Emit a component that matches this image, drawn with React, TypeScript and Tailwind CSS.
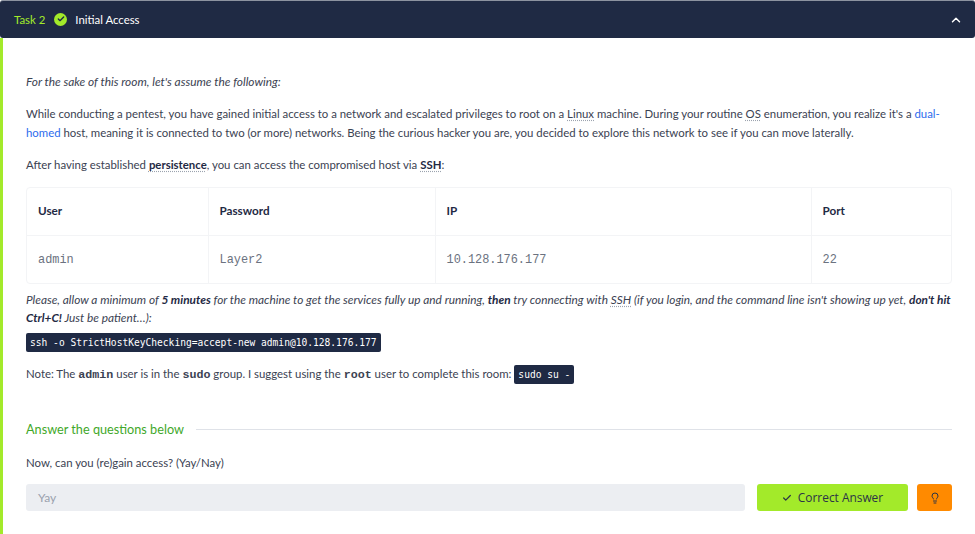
import { Check, ChevronUp, Lightbulb } from "lucide-react";

const Dotted = ({ children }: { children: React.ReactNode }) => (
  <span className="underline decoration-dotted decoration-[#9ca3af] underline-offset-2">{children}</span>
);
const Code = ({ children }: { children: React.ReactNode }) => (
  <code className="rounded-[2px] bg-[#1f2a44] px-1 py-[4px] font-['DejaVu_Sans_Mono',monospace] text-[9.6px] text-white">{children}</code>
);
const Mono = ({ children }: { children: React.ReactNode }) => (
  <span className="font-['Liberation_Mono',monospace] text-[11.7px] font-bold">{children}</span>
);

export default function App() {
  return (
    <div className="h-[534px] w-[975px] overflow-hidden bg-white font-['Lato',sans-serif] text-[11.4px] text-[#3b4252]">
      <header className="flex h-[38px] items-center justify-between rounded-[3px] border-t border-[#8c93a0] bg-[#1f2a44] pl-[14px] pr-[12px]">
        <div className="flex items-center">
          <span className="text-[#a3ea2a]">Task 2</span>
          <span className="ml-[9px] flex h-[13px] w-[13px] items-center justify-center rounded-full bg-[#a3ea2a]">
            <Check size={8} strokeWidth={4} className="text-[#1f2a44]" />
          </span>
          <span className="ml-[8px] text-white">Initial Access</span>
        </div>
        <ChevronUp size={14} strokeWidth={2.5} className="text-white" />
      </header>
      <main className="h-[496px] border-l-[3px] border-[#a3ea2a] pb-4 pl-[23px] pr-[23px] pt-[34px]">
        <p className="text-[11.9px] leading-[19px] italic">For the sake of this room, let's assume the following:</p>
        <p className="mt-[13px] leading-[19px]">
          While conducting a pentest, you have gained initial access to a network and escalated privileges to root on a <Dotted>Linux</Dotted> machine. During your routine <Dotted>OS</Dotted> enumeration, you realize it's a <span className="text-[#2d6bed]">dual-homed</span> host, meaning it is connected to two (or more) networks. Being the curious hacker you are, you decided to explore this network to see if you can move laterally.
        </p>
        <p className="mt-[13px] leading-[19px]">
          After having established <b className="text-[#1f2a44]"><Dotted>persistence</Dotted></b>, you can access the compromised host via <b className="text-[#1f2a44]"><Dotted>SSH</Dotted></b>:
        </p>
        <div className="mt-[13px] overflow-hidden rounded-[4px] border border-[#f3f4f6]">
          <table className="w-full table-fixed border-collapse">
            <colgroup>
              <col className="w-[181px]" />
              <col className="w-[227px]" />
              <col className="w-[376px]" />
              <col />
            </colgroup>
            <tbody>
              <tr className="h-[47px]">
                {["User", "Password", "IP", "Port"].map((h, i) => (
                  <th key={h} className={i ? "border-l border-[#f3f4f6] px-[11px] text-left text-[11.7px] font-bold text-[#1f2a44]" : "px-[11px] text-left text-[11.7px] font-bold text-[#1f2a44]"}>{h}</th>
                ))}
              </tr>
              <tr className="h-[48px] border-t border-[#f3f4f6]">
                {["admin", "Layer2", "10.128.176.177", "22"].map((c, i) => (
                  <td key={c} className={i ? "border-l border-[#f3f4f6] px-[11px] pt-[3px] font-['Liberation_Mono',monospace] text-[11.9px] text-[#6b7280]" : "px-[11px] pt-[3px] font-['Liberation_Mono',monospace] text-[11.9px] text-[#6b7280]"}>{c}</td>
                ))}
              </tr>
            </tbody>
          </table>
        </div>
        <p className="mt-[7px] text-[11.85px] leading-[18px] italic">
          Please, allow a minimum of <b className="text-[#1f2a44]">5 minutes</b> for the machine to get the services fully up and running, <b className="text-[#1f2a44]">then</b> try connecting with <Dotted>SSH</Dotted> (if you login, and the command line isn't showing up yet, <b className="text-[#1f2a44]">don't hit Ctrl+C!</b> Just be patient…):
        </p>
        <p className="mt-[5px] leading-[19px]">
          <Code>ssh -o StrictHostKeyChecking=accept-new admin@10.128.176.177</Code>
        </p>
        <p className="mt-[12px] leading-[19px]">
          Note: The <Mono>admin</Mono> user is in the <Mono>sudo</Mono> group. I suggest using the <Mono>root</Mono> user to complete this room: <Code>sudo su -</Code>
        </p>
        <div className="mt-[35px] flex items-center gap-3">
          <span className="text-[12.7px] text-[#3fa82a]">Answer the questions below</span>
          <div className="h-px flex-1 bg-[#dfe2e8]" />
        </div>
        <p className="mt-[14px] leading-[19px]">Now, can you (re)gain access? (Yay/Nay)</p>
        <div className="mt-[12px] flex h-[27px] items-stretch">
          <div className="flex w-[719px] items-center rounded-[3px] bg-[#eceef2] px-3 text-[12px] text-[#9aa1ae]">Yay</div>
          <button className="ml-[12px] flex w-[151px] items-center justify-center gap-1.5 rounded-[3px] bg-[#a3ea2a] font-['Open_Sans',sans-serif] text-[11.9px] text-[#2b3447]">
            <Check size={10} strokeWidth={3} />Correct Answer
          </button>
          <button className="ml-[9px] flex w-[35px] items-center justify-center rounded-[3px] bg-[#ff8a00] text-[#2b3447]">
            <Lightbulb size={12} />
          </button>
        </div>
      </main>
    </div>
  );
}
